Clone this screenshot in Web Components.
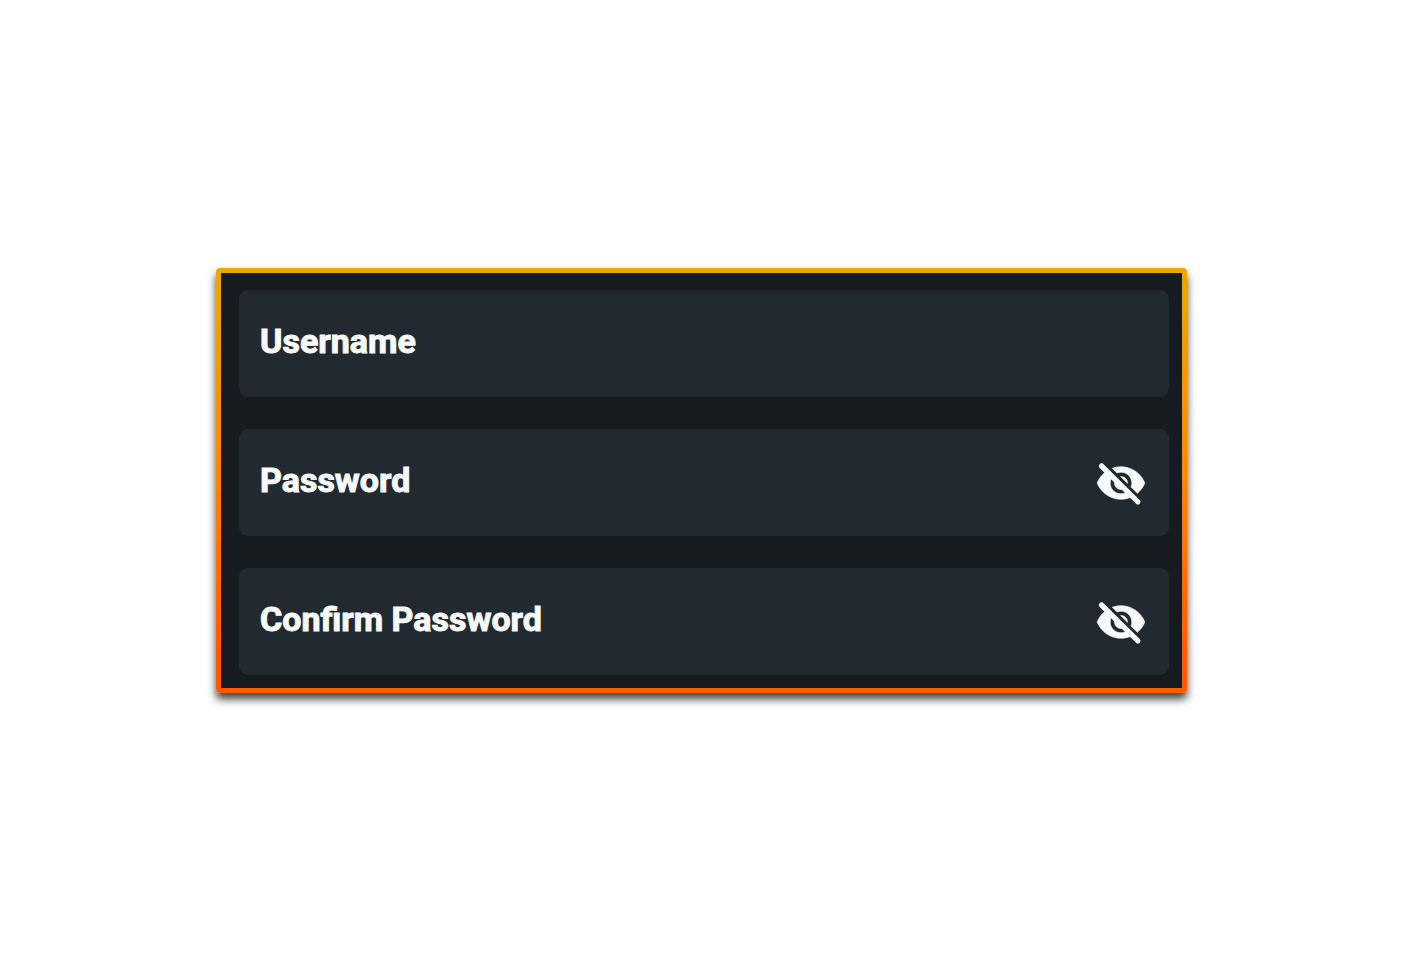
<!DOCTYPE html>
<html lang="en">
<head>
<meta charset="utf-8">
<meta name="viewport" content="width=device-width, initial-scale=1">
<title>Sign up</title>
<style>
    body {
        margin: 0;
        background: #fff;
        font-family: Roboto, sans-serif;
    }
</style>
</head>
<body>
<sign-up-page>
    <form-card>
        <form-field name="username" type="text">Username</form-field>
        <form-field name="password" type="password">Password</form-field>
        <form-field name="confirm" type="password">Confirm Password</form-field>
    </form-card>
</sign-up-page>

<script>
const pageTemplate = document.createElement('template');
pageTemplate.innerHTML = `
<style>
    :host {
        display: flex;
        align-items: center;
        box-sizing: border-box;
        min-height: 100vh;
        padding: 0 217px 0 216px;
    }

    @media (max-width: 800px) {
        :host {
            padding: 24px;
        }
    }

    main {
        flex: 1;
        min-width: 0;
    }
</style>

<main><slot></slot></main>
`;

const cardTemplate = document.createElement('template');
cardTemplate.innerHTML = `
<style>
    :host {
        display: block;
        border: 5px solid transparent;
        border-radius: 4px;
        background:
            linear-gradient(#151b21, #151b21) padding-box,
            linear-gradient(#e9ab00, #ff8400 50%, #ff5a00 90%) border-box;
        box-shadow: 0 6px 8px rgba(0, 0, 0, 0.75);
    }

    form {
        display: flex;
        flex-direction: column;
        gap: 32px;
        padding: 17px 13px 13px 18px;
    }
</style>

<form><slot></slot></form>
`;

const fieldTemplate = document.createElement('template');
fieldTemplate.innerHTML = `
<style>
    :host {
        display: grid;
        grid-template-columns: 1fr auto;
        align-items: center;
        min-height: 107px;
        border-radius: 9px;
        background: #212a30;
        color: #f7f9fa;
    }

    :host(:focus-within) {
        background: #27323a;
    }

    label {
        grid-area: 1 / 1;
        padding: 0 21px 5px;
        font-size: 34px;
        font-weight: 700;
        line-height: 40px;
        -webkit-text-stroke: 1px currentColor;
        pointer-events: none;
    }

    input {
        grid-area: 1 / 1;
        align-self: stretch;
        min-width: 0;
        padding: 0 21px;
        border: 0;
        outline: 0;
        background: none;
        color: inherit;
        font: inherit;
        font-size: 34px;
    }

    /* the label gives way once something is typed */
    input:not(:placeholder-shown) + label {
        visibility: hidden;
    }

    button {
        display: flex;
        margin: 0 22px 0 0;
        padding: 0;
        border: 0;
        background: none;
        color: inherit;
        cursor: pointer;
    }

    button[hidden] {
        display: none;
    }

    svg {
        width: 52px;
        height: 52px;
        fill: currentColor;
        stroke: currentColor;
        stroke-width: 0.3;
        stroke-linejoin: round;
    }

    .slash {
        stroke-width: 2.4;
        stroke-linecap: round;
    }
</style>

<input id="input" placeholder=" ">
<label for="input"><slot></slot></label>
<button type="button" aria-label="Toggle password visibility" hidden>
    <svg viewBox="0 0 24 24" aria-hidden="true">
        <path d="M12 7c2.76 0 5 2.24 5 5 0 .65-.13 1.26-.36 1.83l2.92 2.92c1.51-1.26 2.7-2.89 3.43-4.75-1.73-4.39-6-7.5-11-7.5-1.4 0-2.74.25-3.98.7l2.16 2.16C10.74 7.13 11.35 7 12 7zM2 4.27l2.28 2.28.46.46C3.08 8.3 1.78 10.02 1 12c1.73 4.39 6 7.5 11 7.5 1.55 0 3.03-.3 4.38-.84l.42.42L19 21 20 20 3.27 3 2 4.27zM7.53 9.8l1.55 1.55c-.05.21-.08.43-.08.65 0 1.66 1.34 3 3 3 .22 0 .44-.03.65-.08l1.55 1.55c-.67.33-1.41.53-2.2.53-2.76 0-5-2.24-5-5 0-.79.2-1.53.53-2.2zm4.31-.78l3.15 3.15.02-.16c0-1.66-1.34-3-3-3l-.17.01z"/>
        <path class="slash" d="M3 4.2 19.8 20.7"/>
    </svg>
</button>
`;

class SignUpPage extends HTMLElement {
    constructor() {
        super();
        this.attachShadow({ mode: 'open' });
        this.shadowRoot.appendChild(pageTemplate.content.cloneNode(true));
    }
}

class FormCard extends HTMLElement {
    constructor() {
        super();
        this.attachShadow({ mode: 'open' });
        this.shadowRoot.appendChild(cardTemplate.content.cloneNode(true));
    }
}

class FormField extends HTMLElement {
    constructor() {
        super();
        this.attachShadow({ mode: 'open' });
        this.shadowRoot.appendChild(fieldTemplate.content.cloneNode(true));
    }

    connectedCallback() {
        const input = this.shadowRoot.querySelector('input');
        const button = this.shadowRoot.querySelector('button');
        input.type = this.getAttribute('type') || 'text';
        input.name = this.getAttribute('name') || '';
        button.hidden = input.type !== 'password';
        button.onclick = () => {
            input.type = input.type === 'password' ? 'text' : 'password';
        };
    }
}

customElements.define('sign-up-page', SignUpPage);
customElements.define('form-card', FormCard);
customElements.define('form-field', FormField);
</script>
</body>
</html>
